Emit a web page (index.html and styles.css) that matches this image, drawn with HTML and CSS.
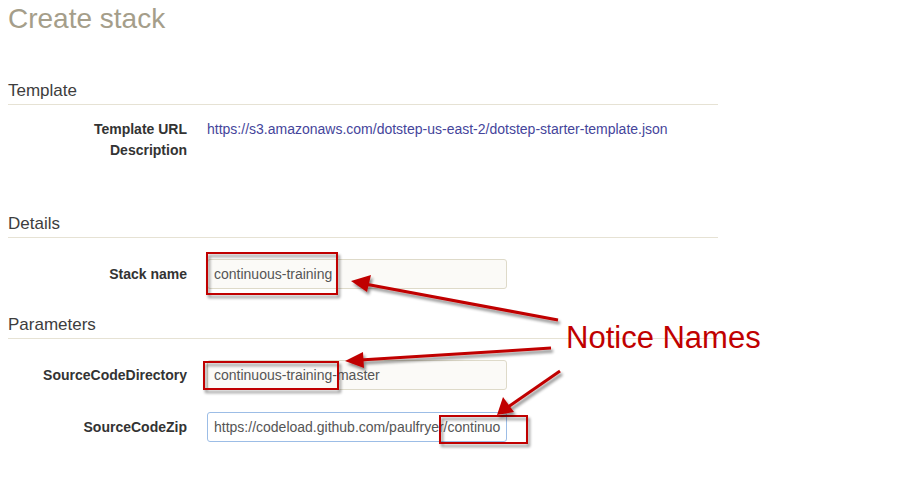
FILE: index.html
```html
<!DOCTYPE html>
<html>
<head>
<meta charset="utf-8">
<link rel="stylesheet" href="styles.css">
</head>
<body>
<div class="page">
  <h1 class="title">Create stack</h1>

  <section class="section template">
    <h2 class="section-head">Template</h2>
    <div class="info-rows">
      <div class="info-row"><div class="label">Template URL</div><div class="value link">https://s3.amazonaws.com/dotstep-us-east-2/dotstep-starter-template.json</div></div>
      <div class="info-row"><div class="label">Description</div><div class="value"></div></div>
    </div>
  </section>

  <section class="section details">
    <h2 class="section-head">Details</h2>
    <div class="form-row first"><div class="label">Stack name</div><div class="input">continuous-training</div></div>
  </section>

  <section class="section params">
    <h2 class="section-head">Parameters</h2>
    <div class="form-row first"><div class="label">SourceCodeDirectory</div><div class="input">continuous-training-master</div></div>
    <div class="form-row"><div class="label">SourceCodeZip</div><div class="input focus">https://codeload.github.com/paulfryer/continuo</div></div>
  </section>
</div>

<svg class="annotations" width="906" height="484" viewBox="0 0 906 484">
  <defs>
    <filter id="shadow" x="-20%" y="-20%" width="140%" height="160%">
      <feGaussianBlur in="SourceAlpha" stdDeviation="1.6"/>
      <feOffset dx="2" dy="3" result="b"/>
      <feComponentTransfer><feFuncA type="linear" slope="0.45"/></feComponentTransfer>
      <feMerge><feMergeNode/><feMergeNode in="SourceGraphic"/></feMerge>
    </filter>
  </defs>
  <g filter="url(#shadow)" fill="none" stroke="#c00000" stroke-width="2">
    <rect x="207" y="253" width="130" height="41"/>
    <rect x="204" y="362" width="134" height="27"/>
    <rect x="440" y="416" width="87" height="27"/>
  </g>
  <g filter="url(#shadow)">
    <line x1="558" y1="320" x2="365" y2="284" stroke="#c00000" stroke-width="3"/>
    <polygon points="351,281 371,275 367,292" fill="#c00000"/>
    <line x1="551" y1="348" x2="360" y2="360" stroke="#c00000" stroke-width="3"/>
    <polygon points="345,361 363,352 364,368" fill="#c00000"/>
    <line x1="560" y1="371" x2="508" y2="407" stroke="#c00000" stroke-width="3"/>
    <polygon points="497,415 503,397 514,412" fill="#c00000"/>
  </g>
  <text x="566" y="348" class="notice">Notice Names</text>
</svg>
</body>
</html>
```

FILE: styles.css
```css
html, body {
  margin: 0;
  padding: 0;
  background: #ffffff;
}
body {
  font-family: "Liberation Sans", Arial, sans-serif;
  width: 906px;
  height: 484px;
  overflow: hidden;
  position: relative;
}
.page {
  padding: 0 8px;
  width: 710px;
}
.title {
  margin: 0;
  padding-top: 1px;
  font-size: 28px;
  line-height: 36px;
  font-weight: normal;
  color: #a59e8a;
}
.section-head {
  margin: 0;
  font-size: 17px;
  line-height: 24px;
  font-weight: normal;
  color: #3d3d3d;
  padding-top: 2px;
  padding-bottom: 1px;
  border-bottom: 1px solid #e6e2d4;
}
.template { margin-top: 40px; }
.details { margin-top: 49px; }
.params { margin-top: 22px; }
.info-rows { padding-top: 14px; }
.info-row {
  display: flex;
  gap: 20px;
  line-height: 21px;
  height: 21px;
}
.label {
  width: 179px;
  flex: none;
  text-align: right;
  font-weight: bold;
  font-size: 14px;
  color: #333333;
}
.value {
  font-size: 14px;
  color: #333;
}
.link { color: #45459b; }
.form-row {
  display: flex;
  gap: 20px;
  align-items: center;
  margin-top: 22px;
}
.form-row.first { margin-top: 21px; }
.input {
  width: 300px;
  height: 30px;
  box-sizing: border-box;
  border: 1px solid #dedac9;
  border-radius: 3px;
  background: #fbfaf7;
  padding: 0 6px;
  font-size: 14px;
  line-height: 28px;
  color: #555555;
  white-space: nowrap;
  overflow: hidden;
}
.input.focus {
  background: #ffffff;
  border-color: #9cbde6;
}
.annotations {
  position: absolute;
  left: 0;
  top: 0;
  pointer-events: none;
}
.notice {
  font-family: "Liberation Sans", Arial, sans-serif;
  font-size: 31px;
  fill: #c00000;
}
```
